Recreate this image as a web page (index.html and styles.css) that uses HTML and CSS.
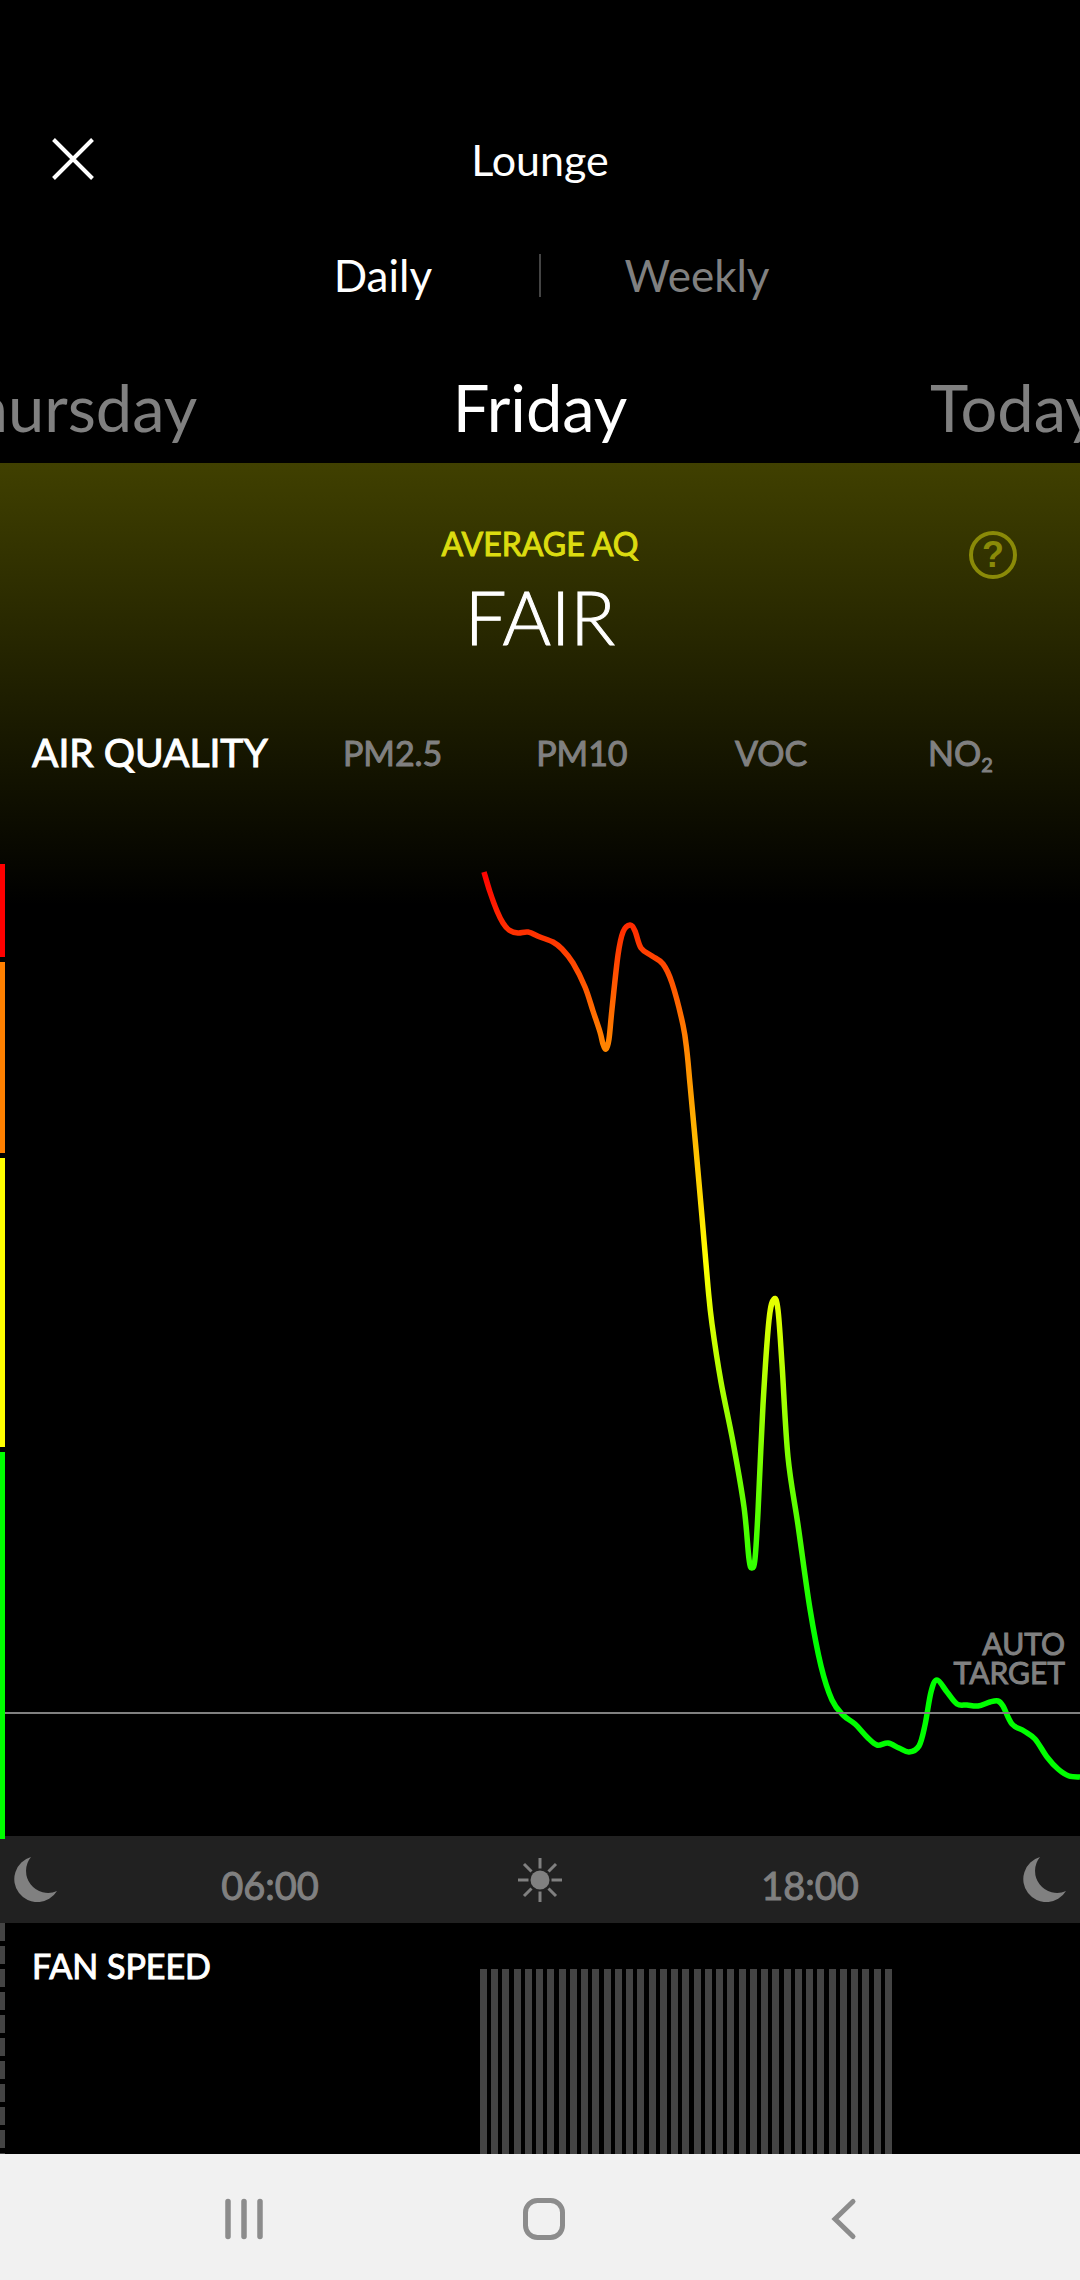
FILE: index.html
```html
<!DOCTYPE html>
<html lang="en">
<head>
  <meta charset="utf-8">
  <meta name="viewport" content="width=device-width, initial-scale=1">
  <title>Lounge</title>
  <link rel="stylesheet" href="styles.css">
</head>
<body>
  <header class="header">
    <button class="close" aria-label="Close">
      <svg width="42" height="42" viewBox="0 0 42 42"><path d="M1.5 1.5L40.5 40.5M40.5 1.5L1.5 40.5" stroke="#fff" stroke-width="4"/></svg>
    </button>
    <h1 class="title">Lounge</h1>
  </header>

  <div class="period">
    <button class="period-btn active">Daily</button>
    <span class="divider"></span>
    <button class="period-btn">Weekly</button>
  </div>

  <div class="days">
    <button class="day">Thursday</button>
    <button class="day active">Friday</button>
    <button class="day">Today</button>
  </div>

  <main class="main">
    <section class="summary">
      <h2 class="summary-label">AVERAGE AQ</h2>
      <p class="summary-value">FAIR</p>
      <button class="help" aria-label="Help">?</button>
    </section>

    <nav class="tabs">
      <button class="tab active">AIR QUALITY</button>
      <button class="tab">PM2.5</button>
      <button class="tab">PM10</button>
      <button class="tab">VOC</button>
      <button class="tab">NO<span class="sub">2</span></button>
    </nav>

    <section class="chart">
      <svg class="plot" viewBox="0 0 1080 972">
        <defs>
          <linearGradient id="level" gradientUnits="userSpaceOnUse" x1="0" y1="0" x2="0" y2="972">
            <stop offset="0.5%" stop-color="#f00"/>
            <stop offset="18%" stop-color="#ff8000"/>
            <stop offset="41%" stop-color="#ff0"/>
            <stop offset="80%" stop-color="#0f0"/>
          </linearGradient>
        </defs>
        <path id="line" fill="none" stroke="url(#level)" stroke-width="5.5" stroke-linejoin="round"/>
        <path d="M0 849H1080" stroke="#808080" stroke-width="2"/>
        <path d="M0 0h5v93H0z" fill="#f00"/>
        <path d="M0 98h5v191H0z" fill="#ff8000"/>
        <path d="M0 294h5v289H0z" fill="#ff0"/>
        <path d="M0 588h5v387H0z" fill="#0f0"/>
      </svg>
      <p class="target">AUTO<br>TARGET</p>
    </section>

    <div class="axis">
      <svg class="moon" width="44" height="45" viewBox="0 0 44 45"><path d="M18 0A23 23 0 1 0 44 34A22 22 0 0 1 18 0z" fill="#808080"/></svg>
      <span>06:00</span>
      <svg width="46" height="46" viewBox="0 0 46 46">
        <circle cx="23" cy="23" r="9.5" fill="#808080"/>
        <path d="M23 1v10.5M23 34.5v10.5M1 23h10.5M34.500 23h10.500M7 7l7.500 7.500M31.500 31.500L39 39M39 7l-7.500 7.500M14.500 31.500L7 39" stroke="#808080" stroke-width="3"/>
      </svg>
      <span>18:00</span>
      <svg class="moon" width="44" height="45" viewBox="0 0 44 45"><path d="M18 0A23 23 0 1 0 44 34A22 22 0 0 1 18 0z" fill="#808080"/></svg>
    </div>

    <section class="fan">
      <div class="fan-scale"></div>
      <h2 class="fan-title">FAN SPEED</h2>
      <div class="fan-bars"></div>
    </section>
  </main>

  <footer class="navbar">
    <button class="nav-btn" aria-label="Recent apps">
      <svg width="44" height="44" viewBox="0 0 44 44"><path d="M6 4.500v35M22 4.500v35M38 4.500v35" stroke="#8c8c8c" stroke-width="5.500" stroke-linecap="round"/></svg>
    </button>
    <button class="nav-btn" aria-label="Home">
      <svg width="44" height="44" viewBox="0 0 44 44"><rect x="3.500" y="3.500" width="37" height="37" rx="12" fill="none" stroke="#8c8c8c" stroke-width="5"/></svg>
    </button>
    <button class="nav-btn" aria-label="Back">
      <svg width="44" height="44" viewBox="0 0 44 44"><path d="M31 4.500L13 22l18 17.500" fill="none" stroke="#8c8c8c" stroke-width="5" stroke-linecap="round"/></svg>
    </button>
  </footer>

  <script>
    const points = [
      [484, 8], [490, 28], [497, 47], [503, 59], [509, 66], [518, 69], [528, 68], [540, 73], [553, 78],
      [562, 85], [573, 99], [585, 123], [593, 147], [600, 168], [603, 180], [606, 185], [609, 175], [612, 145], [618, 91],
      [623, 68], [630, 61], [635, 67], [641, 84], [652, 92], [663, 100], [672, 119], [683, 161], [687, 188], [690, 220],
      [696, 285], [702, 353], [708, 423], [712, 460], [721, 518], [733, 578], [744, 643], [749, 695],
      [752, 704], [755, 695], [758, 648], [763, 541], [769, 456], [774, 435], [778, 446], [782, 500],
      [788, 593], [798, 661], [810, 745], [821, 802], [832, 836], [843, 851], [855, 860], [867, 873],
      [877, 881], [888, 879], [899, 884], [909, 888], [919, 882], [925, 861], [931, 828], [937, 816],
      [947, 828], [957, 840], [967, 841], [978, 842], [990, 838], [998, 837], [1003, 842], [1012, 860],
      [1024, 867], [1035, 875], [1047, 893], [1058, 905], [1069, 912], [1080, 913]
    ];

    function smooth(p) {
      let d = "M" + p[0];
      for (let i = 0; i < p.length - 1; i++) {
        const a = p[i - 1] || p[i], b = p[i], c = p[i + 1], e = p[i + 2] || c;
        d += "C" + [b[0] + (c[0] - a[0]) / 6, b[1] + (c[1] - a[1]) / 6, c[0] - (e[0] - b[0]) / 6, c[1] - (e[1] - b[1]) / 6, c[0], c[1]];
      }
      return d;
    }

    document.getElementById("line").setAttribute("d", smooth(points));
  </script>
</body>
</html>
```
FILE: styles.css
```css
* {
  box-sizing: border-box;
}

body {
  margin: 0;
  min-height: 100vh;
  display: flex;
  flex-direction: column;
  background: #000;
  color: #fff;
  font-family: Lato, "Open Sans", sans-serif;
  overflow-x: hidden;
}

h1, h2, p {
  margin: 0;
  font-weight: 400;
}

button {
  padding: 0;
  border: none;
  background: none;
  color: #808080;
  font-family: inherit;
  cursor: pointer;
}

svg {
  display: block;
}

button.active {
  color: #fff;
}

.header {
  display: grid;
  grid-template-columns: 1fr auto 1fr;
  align-items: center;
  height: 126px;
  margin-top: 96px;
  padding: 0 52px;
}

.close {
  justify-self: start;
}

.title {
  font-size: 43px;
}

.period {
  display: grid;
  grid-template-columns: 1fr 2px 1fr;
  align-items: center;
  width: 58%;
  height: 106px;
  margin: 0 auto;
}

.period-btn {
  font-size: 44px;
}

.divider {
  height: 43px;
  background: #444;
}

.days {
  display: flex;
  justify-content: center;
  gap: 10px;
  height: 135px;
  padding-top: 22px;
  overflow: hidden;
}

.day {
  flex: 0 0 43%;
  font-size: 65px;
}

.main {
  flex: 1;
  display: flex;
  flex-direction: column;
  background: linear-gradient(#404000, #000 442px);
}

.summary {
  position: relative;
  padding-top: 64px;
  text-align: center;
}

/* Lato has no medium cut here, a thin stroke gives the heavier caps */
.summary-label,
.tab,
.target,
.axis,
.fan-title {
  -webkit-text-stroke: 1px currentColor;
}

.summary-label {
  color: #dcdc10;
  font-size: 32px;
  line-height: 34px;
}

.summary-value {
  margin-top: 16px;
  font-size: 74px;
  font-weight: 300;
  line-height: 80px;
  -webkit-text-stroke: 1px currentColor;
}

.help {
  position: absolute;
  top: 68px;
  right: 63px;
  width: 48px;
  height: 48px;
  border: 4px solid #8a8a08;
  border-radius: 50%;
  color: #8a8a08;
  font-family: "Liberation Sans", Arial, sans-serif;
  font-size: 36px;
  font-weight: 700;
  line-height: 40px;
}

.tabs {
  display: grid;
  grid-template-columns: 298px repeat(4, 1fr);
  height: 80px;
  margin: 55px 0 72px;
  padding-right: 25px;
}

.tab {
  font-size: 34px;
}

.tab.active {
  padding-left: 32px;
  font-size: 39px;
  text-align: left;
}

.sub {
  position: relative;
  top: 6px;
  font-size: 20px;
}

.chart {
  position: relative;
}

.plot {
  position: relative;
  z-index: 1;
  width: 100%;
  height: auto;
  overflow: visible;
}

.target {
  position: absolute;
  right: 15px;
  bottom: 149px;
  color: #808080;
  font-size: 30px;
  line-height: 29px;
  text-align: right;
}

.axis {
  display: grid;
  grid-template-columns: 1fr 2fr 2fr 2fr 1fr;
  align-items: center;
  justify-items: center;
  height: 87px;
  background: #212121;
  color: #808080;
  font-size: 38px;
}

.axis span {
  padding-top: 10px;
}

.moon:first-child {
  justify-self: start;
  margin-left: 13px;
}

.moon:last-child {
  justify-self: end;
  margin-right: 14px;
}

.fan {
  flex: 1;
  display: grid;
  grid-template-columns: 5px 44% 38.5% 1fr;
  min-height: 231px;
}

.fan-scale {
  background: repeating-linear-gradient(#444 0 18px, #000 18px 23px);
}

.fan-title {
  padding: 22px 0 0 27px;
  font-size: 34px;
}

.fan-bars {
  margin-top: 46px;
  background: repeating-linear-gradient(90deg, #444 0 7px, #000 7px calc(100% / 37));
}

.navbar {
  display: grid;
  grid-template-columns: repeat(3, 28%);
  justify-content: center;
  height: 126px;
  padding: 4px 0 0 8px;
  background: #f1f1f1;
}

.nav-btn {
  display: flex;
  align-items: center;
  justify-content: center;
}
```
